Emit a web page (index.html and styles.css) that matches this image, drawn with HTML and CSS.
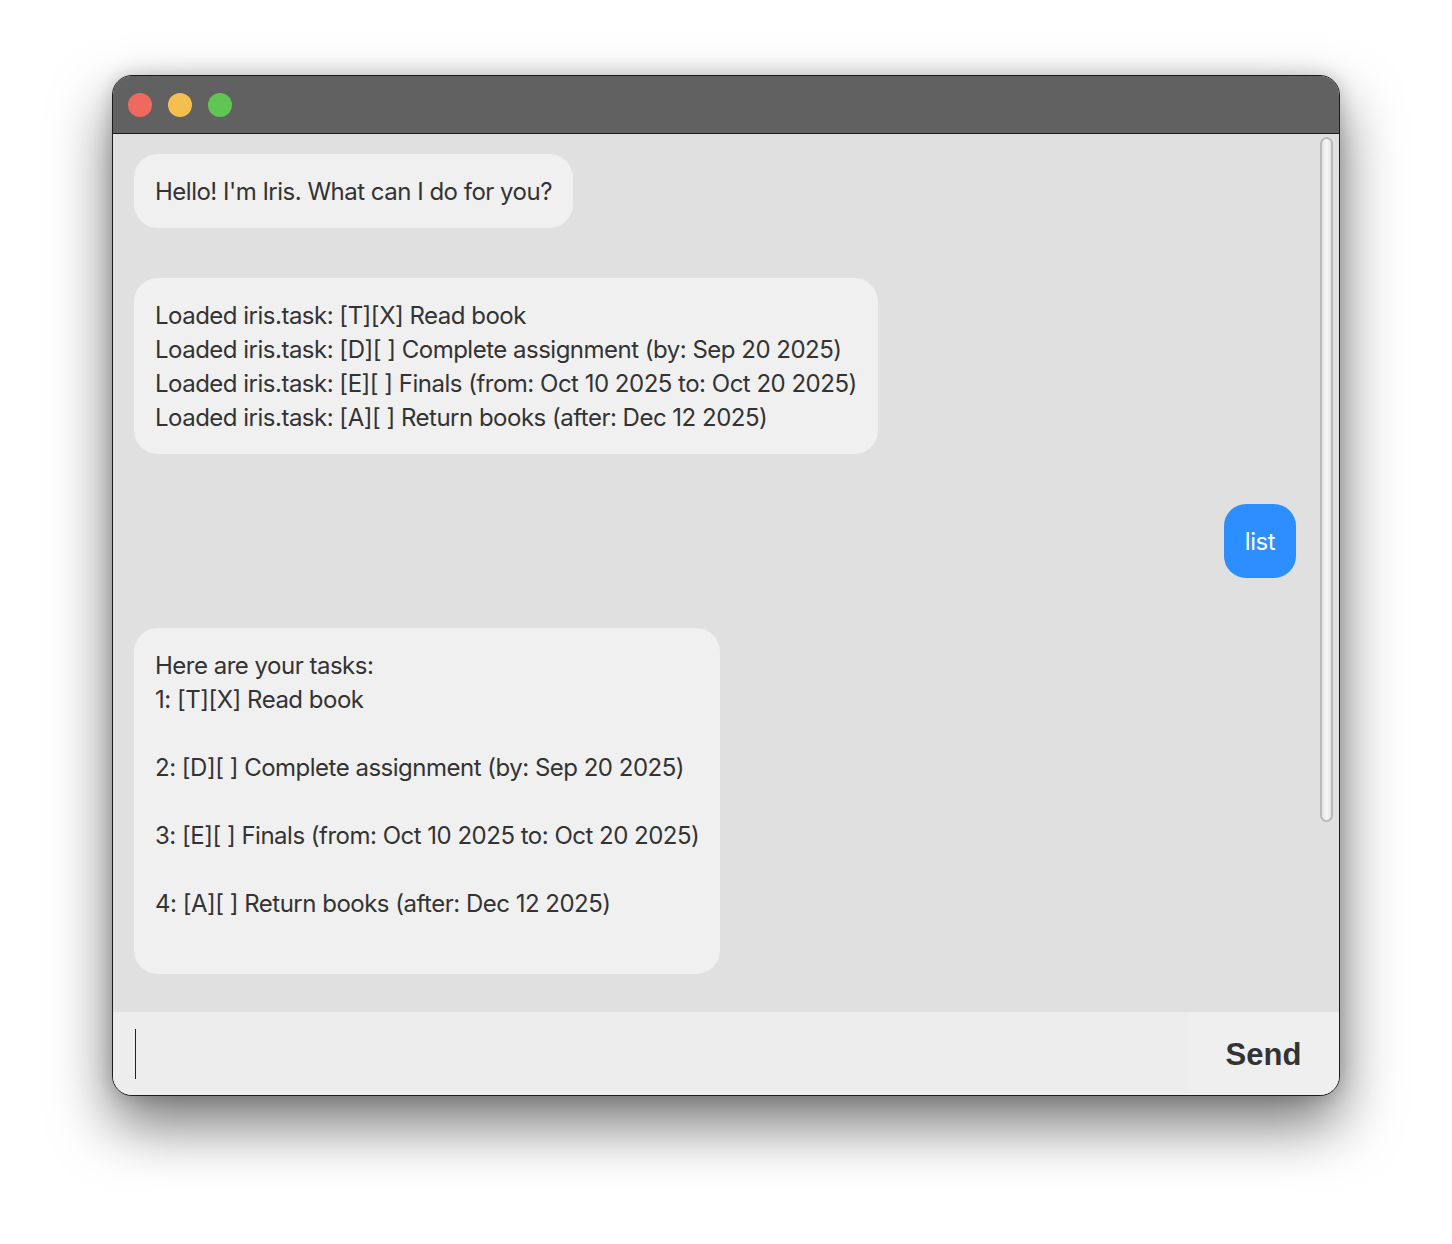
FILE: index.html
```html
<!DOCTYPE html>
<html>
<head>
<meta charset="utf-8">
<link rel="stylesheet" href="styles.css">
</head>
<body>
<div class="window">
  <div class="titlebar">
    <span class="light red"></span>
    <span class="light yellow"></span>
    <span class="light green"></span>
  </div>
  <div class="chat">
    <div class="messages">
      <div class="row left"><div class="bubble bot">Hello! I'm Iris. What can I do for you?</div></div>
      <div class="row left"><div class="bubble bot">Loaded iris.task: [T][X] Read book<br>Loaded iris.task: [D][ ] Complete assignment (by: Sep 20 2025)<br>Loaded iris.task: [E][ ] Finals (from: Oct 10 2025 to: Oct 20 2025)<br>Loaded iris.task: [A][ ] Return books (after: Dec 12 2025)</div></div>
      <div class="row right"><div class="bubble user">list</div></div>
      <div class="row left"><div class="bubble bot">Here are your tasks:<br>1: [T][X] Read book<br><br>2: [D][ ] Complete assignment (by: Sep 20 2025)<br><br>3: [E][ ] Finals (from: Oct 10 2025 to: Oct 20 2025)<br><br>4: [A][ ] Return books (after: Dec 12 2025)<br>&nbsp;</div></div>
    </div>
    <div class="scrollbar"><div class="thumb"></div></div>
  </div>
  <div class="inputbar">
    <div class="input"><span class="caret"></span></div>
    <div class="send">Send</div>
  </div>
</div>
</body>
</html>
```

FILE: styles.css
```css
html, body {
  margin: 0;
  padding: 0;
  background: #ffffff;
}
body {
  padding: 75px 0 0 112px;
  height: 1244px;
  box-sizing: border-box;
  overflow: hidden;
}
.window {
  width: 1228px;
  height: 1021px;
  box-sizing: border-box;
  border: 1px solid #1c1c1c;
  border-radius: 20px;
  overflow: hidden;
  display: flex;
  flex-direction: column;
  background: #e0e0e0;
  box-shadow: 0 28px 60px rgba(0, 0, 0, 0.55), 0 0 18px rgba(0, 0, 0, 0.18);
}
.titlebar {
  height: 57px;
  flex: none;
  background: #616161;
  border-bottom: 1px solid #1c1c1c;
  display: flex;
  align-items: center;
  gap: 16px;
  padding-left: 15px;
}
.light {
  width: 24px;
  height: 24px;
  border-radius: 50%;
  display: block;
}
.red { background: #ed6a5e; }
.yellow { background: #f4bf4f; }
.green { background: #61c554; }

.chat {
  flex: none;
  height: 878px;
  display: flex;
  background: #e0e0e0;
}
.messages {
  flex: 1;
  padding: 20px 24px 0 21px;
  display: flex;
  flex-direction: column;
  gap: 50px;
}
.row {
  display: flex;
}
.row.right {
  justify-content: flex-end;
}
.bubble {
  font-family: Inter, "Noto Sans", sans-serif;
  font-size: 24px;
  line-height: 34px;
  letter-spacing: -0.5px;
  padding: 21px 21px 19px 21px;
  border-radius: 24px;
  white-space: pre;
}
.bot {
  background: #f0f0f0;
  color: #333333;
}
.user {
  background: #2c8eff;
  color: #ffffff;
  border-radius: 22px;
}
.scrollbar {
  flex: none;
  width: 13px;
  margin: 3px 6px 0 0;
}
.thumb {
  height: 685px;
  box-sizing: border-box;
  border: 2px solid #b9b9b9;
  border-radius: 7px;
  background: linear-gradient(to right, #e4e4e4, #f6f6f6 50%, #e4e4e4);
}
.inputbar {
  flex: 1;
  display: flex;
}
.input {
  flex: 1;
  background: #ededed;
  display: flex;
  align-items: center;
  padding-left: 22px;
}
.caret {
  display: block;
  width: 1px;
  height: 50px;
  background: #222222;
}
.send {
  width: 151px;
  flex: none;
  background: #efefef;
  display: flex;
  align-items: center;
  justify-content: center;
  padding-top: 2px;
  box-sizing: border-box;
  font-family: "Liberation Sans", Arial, sans-serif;
  font-weight: bold;
  font-size: 31px;
  color: #333333;
}
```
